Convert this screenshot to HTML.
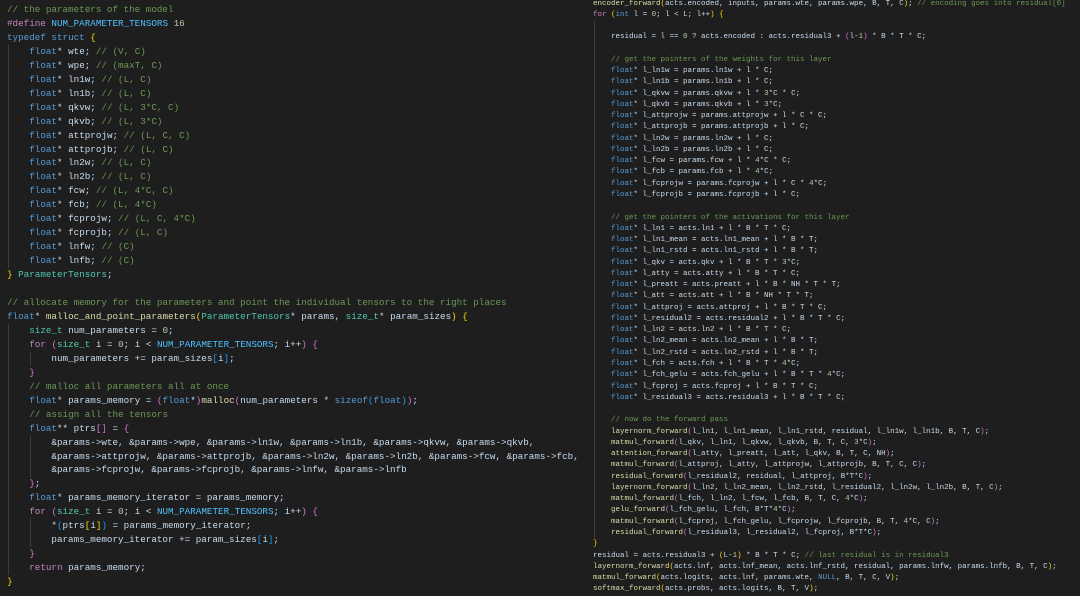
<!DOCTYPE html>
<html><head><meta charset="utf-8">
<style>
html,body{margin:0;padding:0;background:#1e1e1e;width:1080px;height:596px;overflow:hidden}
pre{position:absolute;margin:0;font-family:"Liberation Mono",monospace;color:#c9dcee;white-space:pre}
#L{left:7px;top:3px;font-size:9.25px;line-height:13.95px}
#R{left:593px;top:-1.5px;font-size:7.5px;line-height:11.27px}
.g{position:absolute;width:1px;background:#3c3c3c}
.c{color:#6a9955}.k{color:#569cd6}.p{color:#c586c0}.f{color:#dcdcaa}.t{color:#4ec9b0}
.n{color:#b5cea8}.m{color:#4fc1ff}.y{color:#ffd700}.o{color:#da70d6}.b{color:#179fff}.d{color:#d4d4d4}
</style></head><body>
<div class="g" style="left:8px;top:45px;height:223px"></div>
<div class="g" style="left:8px;top:324px;height:251px"></div>
<div class="g" style="left:30px;top:352px;height:14px"></div>
<div class="g" style="left:30px;top:436px;height:42px"></div>
<div class="g" style="left:30px;top:519px;height:28px"></div>
<div class="g" style="left:594px;top:21px;height:518px"></div>
<pre id="L"><span class="c">// the parameters of the model</span>
<span class="p">#define</span> <span class="m">NUM_PARAMETER_TENSORS</span> <span class="n">16</span>
<span class="k">typedef</span> <span class="k">struct</span> <span class="y">{</span>
    <span class="k">float</span>* wte; <span class="c">// (V, C)</span>
    <span class="k">float</span>* wpe; <span class="c">// (maxT, C)</span>
    <span class="k">float</span>* ln1w; <span class="c">// (L, C)</span>
    <span class="k">float</span>* ln1b; <span class="c">// (L, C)</span>
    <span class="k">float</span>* qkvw; <span class="c">// (L, 3*C, C)</span>
    <span class="k">float</span>* qkvb; <span class="c">// (L, 3*C)</span>
    <span class="k">float</span>* attprojw; <span class="c">// (L, C, C)</span>
    <span class="k">float</span>* attprojb; <span class="c">// (L, C)</span>
    <span class="k">float</span>* ln2w; <span class="c">// (L, C)</span>
    <span class="k">float</span>* ln2b; <span class="c">// (L, C)</span>
    <span class="k">float</span>* fcw; <span class="c">// (L, 4*C, C)</span>
    <span class="k">float</span>* fcb; <span class="c">// (L, 4*C)</span>
    <span class="k">float</span>* fcprojw; <span class="c">// (L, C, 4*C)</span>
    <span class="k">float</span>* fcprojb; <span class="c">// (L, C)</span>
    <span class="k">float</span>* lnfw; <span class="c">// (C)</span>
    <span class="k">float</span>* lnfb; <span class="c">// (C)</span>
<span class="y">}</span> <span class="t">ParameterTensors</span>;

<span class="c">// allocate memory for the parameters and point the individual tensors to the right places</span>
<span class="k">float</span>* <span class="f">malloc_and_point_parameters</span><span class="y">(</span><span class="t">ParameterTensors</span>* params, <span class="t">size_t</span>* param_sizes<span class="y">)</span> <span class="y">{</span>
    <span class="t">size_t</span> num_parameters = <span class="n">0</span>;
    <span class="p">for</span> <span class="o">(</span><span class="t">size_t</span> i = <span class="n">0</span>; i &lt; <span class="m">NUM_PARAMETER_TENSORS</span>; i++<span class="o">)</span> <span class="o">{</span>
        num_parameters += param_sizes<span class="b">[</span>i<span class="b">]</span>;
    <span class="o">}</span>
    <span class="c">// malloc all parameters all at once</span>
    <span class="k">float</span>* params_memory = <span class="o">(</span><span class="k">float</span>*<span class="o">)</span><span class="f">malloc</span><span class="o">(</span>num_parameters * <span class="k">sizeof</span><span class="b">(</span><span class="k">float</span><span class="b">)</span><span class="o">)</span>;
    <span class="c">// assign all the tensors</span>
    <span class="k">float</span>** ptrs<span class="o">[]</span> = <span class="o">{</span>
        &amp;params-&gt;wte, &amp;params-&gt;wpe, &amp;params-&gt;ln1w, &amp;params-&gt;ln1b, &amp;params-&gt;qkvw, &amp;params-&gt;qkvb,
        &amp;params-&gt;attprojw, &amp;params-&gt;attprojb, &amp;params-&gt;ln2w, &amp;params-&gt;ln2b, &amp;params-&gt;fcw, &amp;params-&gt;fcb,
        &amp;params-&gt;fcprojw, &amp;params-&gt;fcprojb, &amp;params-&gt;lnfw, &amp;params-&gt;lnfb
    <span class="o">}</span>;
    <span class="k">float</span>* params_memory_iterator = params_memory;
    <span class="p">for</span> <span class="o">(</span><span class="t">size_t</span> i = <span class="n">0</span>; i &lt; <span class="m">NUM_PARAMETER_TENSORS</span>; i++<span class="o">)</span> <span class="o">{</span>
        *<span class="b">(</span>ptrs<span class="y">[</span>i<span class="y">]</span><span class="b">)</span> = params_memory_iterator;
        params_memory_iterator += param_sizes<span class="b">[</span>i<span class="b">]</span>;
    <span class="o">}</span>
    <span class="p">return</span> params_memory;
<span class="y">}</span></pre>
<pre id="R"><span class="f">encoder_forward</span><span class="y">(</span>acts.encoded, inputs, params.wte, params.wpe, B, T, C<span class="y">)</span>; <span class="c">// encoding goes into residual[0]</span>
<span class="p">for</span> <span class="y">(</span><span class="k">int</span> l = <span class="n">0</span>; l &lt; L; l++<span class="y">)</span> <span class="y">{</span>

    residual = l == <span class="n">0</span> ? acts.encoded : acts.residual3 + <span class="o">(</span>l-<span class="n">1</span><span class="o">)</span> * B * T * C;

    <span class="c">// get the pointers of the weights for this layer</span>
    <span class="k">float</span>* l_ln1w = params.ln1w + l * C;
    <span class="k">float</span>* l_ln1b = params.ln1b + l * C;
    <span class="k">float</span>* l_qkvw = params.qkvw + l * <span class="n">3</span>*C * C;
    <span class="k">float</span>* l_qkvb = params.qkvb + l * <span class="n">3</span>*C;
    <span class="k">float</span>* l_attprojw = params.attprojw + l * C * C;
    <span class="k">float</span>* l_attprojb = params.attprojb + l * C;
    <span class="k">float</span>* l_ln2w = params.ln2w + l * C;
    <span class="k">float</span>* l_ln2b = params.ln2b + l * C;
    <span class="k">float</span>* l_fcw = params.fcw + l * <span class="n">4</span>*C * C;
    <span class="k">float</span>* l_fcb = params.fcb + l * <span class="n">4</span>*C;
    <span class="k">float</span>* l_fcprojw = params.fcprojw + l * C * <span class="n">4</span>*C;
    <span class="k">float</span>* l_fcprojb = params.fcprojb + l * C;

    <span class="c">// get the pointers of the activations for this layer</span>
    <span class="k">float</span>* l_ln1 = acts.ln1 + l * B * T * C;
    <span class="k">float</span>* l_ln1_mean = acts.ln1_mean + l * B * T;
    <span class="k">float</span>* l_ln1_rstd = acts.ln1_rstd + l * B * T;
    <span class="k">float</span>* l_qkv = acts.qkv + l * B * T * <span class="n">3</span>*C;
    <span class="k">float</span>* l_atty = acts.atty + l * B * T * C;
    <span class="k">float</span>* l_preatt = acts.preatt + l * B * NH * T * T;
    <span class="k">float</span>* l_att = acts.att + l * B * NH * T * T;
    <span class="k">float</span>* l_attproj = acts.attproj + l * B * T * C;
    <span class="k">float</span>* l_residual2 = acts.residual2 + l * B * T * C;
    <span class="k">float</span>* l_ln2 = acts.ln2 + l * B * T * C;
    <span class="k">float</span>* l_ln2_mean = acts.ln2_mean + l * B * T;
    <span class="k">float</span>* l_ln2_rstd = acts.ln2_rstd + l * B * T;
    <span class="k">float</span>* l_fch = acts.fch + l * B * T * <span class="n">4</span>*C;
    <span class="k">float</span>* l_fch_gelu = acts.fch_gelu + l * B * T * <span class="n">4</span>*C;
    <span class="k">float</span>* l_fcproj = acts.fcproj + l * B * T * C;
    <span class="k">float</span>* l_residual3 = acts.residual3 + l * B * T * C;

    <span class="c">// now do the forward pass</span>
    <span class="f">layernorm_forward</span><span class="o">(</span>l_ln1, l_ln1_mean, l_ln1_rstd, residual, l_ln1w, l_ln1b, B, T, C<span class="o">)</span>;
    <span class="f">matmul_forward</span><span class="o">(</span>l_qkv, l_ln1, l_qkvw, l_qkvb, B, T, C, <span class="n">3</span>*C<span class="o">)</span>;
    <span class="f">attention_forward</span><span class="o">(</span>l_atty, l_preatt, l_att, l_qkv, B, T, C, NH<span class="o">)</span>;
    <span class="f">matmul_forward</span><span class="o">(</span>l_attproj, l_atty, l_attprojw, l_attprojb, B, T, C, C<span class="o">)</span>;
    <span class="f">residual_forward</span><span class="o">(</span>l_residual2, residual, l_attproj, B*T*C<span class="o">)</span>;
    <span class="f">layernorm_forward</span><span class="o">(</span>l_ln2, l_ln2_mean, l_ln2_rstd, l_residual2, l_ln2w, l_ln2b, B, T, C<span class="o">)</span>;
    <span class="f">matmul_forward</span><span class="o">(</span>l_fch, l_ln2, l_fcw, l_fcb, B, T, C, <span class="n">4</span>*C<span class="o">)</span>;
    <span class="f">gelu_forward</span><span class="o">(</span>l_fch_gelu, l_fch, B*T*<span class="n">4</span>*C<span class="o">)</span>;
    <span class="f">matmul_forward</span><span class="o">(</span>l_fcproj, l_fch_gelu, l_fcprojw, l_fcprojb, B, T, <span class="n">4</span>*C, C<span class="o">)</span>;
    <span class="f">residual_forward</span><span class="o">(</span>l_residual3, l_residual2, l_fcproj, B*T*C<span class="o">)</span>;
<span class="y">}</span>
residual = acts.residual3 + <span class="y">(</span>L-<span class="n">1</span><span class="y">)</span> * B * T * C; <span class="c">// last residual is in residual3</span>
<span class="f">layernorm_forward</span><span class="y">(</span>acts.lnf, acts.lnf_mean, acts.lnf_rstd, residual, params.lnfw, params.lnfb, B, T, C<span class="y">)</span>;
<span class="f">matmul_forward</span><span class="y">(</span>acts.logits, acts.lnf, params.wte, <span class="k">NULL</span>, B, T, C, V<span class="y">)</span>;
<span class="f">softmax_forward</span><span class="y">(</span>acts.probs, acts.logits, B, T, V<span class="y">)</span>;</pre>
</body></html>
